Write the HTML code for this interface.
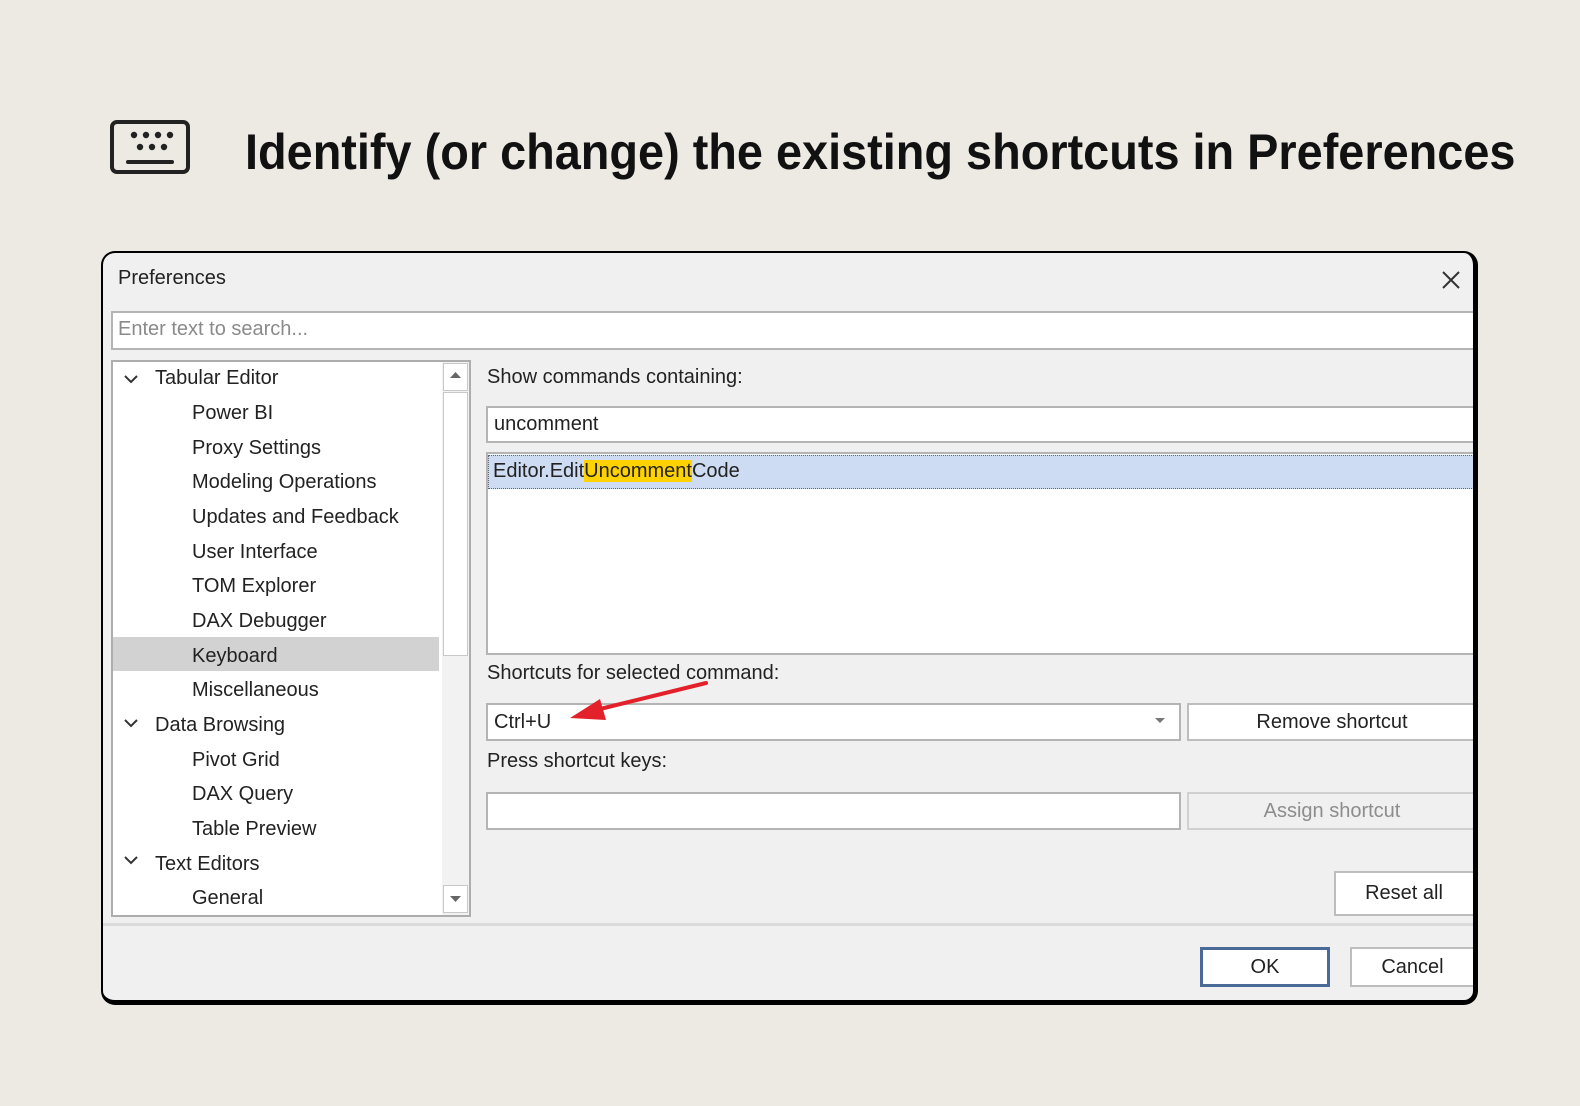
<!DOCTYPE html>
<html><head><meta charset="utf-8"><style>
*{margin:0;padding:0;box-sizing:border-box}
body{width:1580px;height:1106px;background:#ede9e3;position:relative;overflow:hidden;font-family:"Liberation Sans",sans-serif}
.abs{position:absolute}
.title{left:245px;top:123px;font-size:50px;font-weight:bold;color:#111;white-space:nowrap;transform:scaleX(0.937);transform-origin:0 0}
.dlg{left:101px;top:251px;width:1377px;height:754px;background:#f0f0f0;border-style:solid;border-color:#000;border-width:2px 5px 5px 2px;border-radius:14px;overflow:hidden}
.d{font-size:20px;color:#222;white-space:nowrap}
.box{background:#fff;border:2px solid #b4b4b4}
.btn{background:#fff;border:2px solid #bdbdbd;text-align:center;font-size:20px;color:#222}
.tr{position:absolute;font-size:20px;color:#222;white-space:nowrap}
</style></head><body>
<svg class="abs" style="left:110px;top:120px" width="80" height="54" viewBox="0 0 80 54">
<rect x="2" y="2" width="76" height="50" rx="5" fill="none" stroke="#222" stroke-width="4"/>
<g fill="#222"><circle cx="24" cy="15" r="3.2"/><circle cx="36" cy="15" r="3.2"/><circle cx="48" cy="15" r="3.2"/><circle cx="60" cy="15" r="3.2"/>
<circle cx="30" cy="27" r="3.2"/><circle cx="42" cy="27" r="3.2"/><circle cx="54" cy="27" r="3.2"/></g>
<rect x="16" y="40" width="48" height="4" rx="2" fill="#222"/></svg>
<div class="abs title">Identify (or change) the existing shortcuts in Preferences</div>

<div class="abs dlg">
 <div class="abs d" style="left:15px;top:14px">Preferences</div>
 <svg class="abs" style="left:1338px;top:17px" width="20" height="20"><path d="M2 2L18 18M18 2L2 18" stroke="#333" stroke-width="2"/></svg>
 <div class="abs box" style="left:8px;top:58px;width:1380px;height:39px"></div>
 <div class="abs d" style="left:15px;top:65px;color:#8a8a8a">Enter text to search...</div>
 <div class="abs box" style="left:8px;top:107px;width:360px;height:557px;border-color:#adadad"></div>
 <div class="abs" style="left:10px;top:384px;width:326px;height:34px;background:#d2d2d2"></div>
 <div class="abs" style="left:339px;top:109px;width:27px;height:553px;background:#f2f2f2"></div>
 <div class="abs" style="left:340px;top:110px;width:25px;height:28px;background:#fff;border:1px solid #c8c8c8"></div>
 <svg class="abs" style="left:347px;top:119px" width="11" height="7"><path d="M0 6L5.5 0L11 6Z" fill="#666"/></svg>
 <div class="abs" style="left:340px;top:139px;width:25px;height:264px;background:#fff;border:1px solid #c8c8c8"></div>
 <div class="abs" style="left:340px;top:632px;width:25px;height:28px;background:#fff;border:1px solid #c8c8c8"></div>
 <svg class="abs" style="left:347px;top:643px" width="11" height="7"><path d="M0 0L5.5 6L11 0Z" fill="#666"/></svg>
 <svg class="abs" style="left:21px;top:122px" width="14" height="9"><path d="M1 1L7 7L13 1" fill="none" stroke="#333" stroke-width="2"/></svg>
 <svg class="abs" style="left:21px;top:466px" width="14" height="9"><path d="M1 1L7 7L13 1" fill="none" stroke="#333" stroke-width="2"/></svg>
 <svg class="abs" style="left:21px;top:603px" width="14" height="9"><path d="M1 1L7 7L13 1" fill="none" stroke="#333" stroke-width="2"/></svg>
 <div class="tr" style="left:52px;top:114px">Tabular Editor</div>
 <div class="tr" style="left:89px;top:149px">Power BI</div>
 <div class="tr" style="left:89px;top:184px">Proxy Settings</div>
 <div class="tr" style="left:89px;top:218px">Modeling Operations</div>
 <div class="tr" style="left:89px;top:253px">Updates and Feedback</div>
 <div class="tr" style="left:89px;top:288px">User Interface</div>
 <div class="tr" style="left:89px;top:322px">TOM Explorer</div>
 <div class="tr" style="left:89px;top:357px">DAX Debugger</div>
 <div class="tr" style="left:89px;top:392px">Keyboard</div>
 <div class="tr" style="left:89px;top:426px">Miscellaneous</div>
 <div class="tr" style="left:52px;top:461px">Data Browsing</div>
 <div class="tr" style="left:89px;top:496px">Pivot Grid</div>
 <div class="tr" style="left:89px;top:530px">DAX Query</div>
 <div class="tr" style="left:89px;top:565px">Table Preview</div>
 <div class="tr" style="left:52px;top:600px">Text Editors</div>
 <div class="tr" style="left:89px;top:634px">General</div>
 <div class="abs d" style="left:384px;top:113px">Show commands containing:</div>
 <div class="abs box" style="left:383px;top:153px;width:1000px;height:37px"></div>
 <div class="abs d" style="left:391px;top:160px">uncomment</div>
 <div class="abs box" style="left:383px;top:199px;width:1000px;height:203px"></div>
 <div class="abs" style="left:385px;top:202px;width:1000px;height:34px;background:#cddcf3;border-top:1px dotted #666;border-bottom:1px dotted #666;border-left:1px dotted #666"></div>
 <div class="abs d" style="left:390px;top:207px">Editor.Edit<span style="background:#ffd200">Uncomment</span>Code</div>
 <div class="abs d" style="left:384px;top:409px">Shortcuts for selected command:</div>
 <div class="abs box" style="left:383px;top:450px;width:695px;height:38px"></div>
 <div class="abs d" style="left:391px;top:458px">Ctrl+U</div>
 <svg class="abs" style="left:1052px;top:465px" width="10" height="6"><path d="M0 0L5 5L10 0Z" fill="#777"/></svg>
 <div class="abs btn" style="left:1084px;top:450px;width:300px;height:38px;line-height:34px;padding-right:10px">Remove shortcut</div>
 <div class="abs d" style="left:384px;top:497px">Press shortcut keys:</div>
 <div class="abs box" style="left:383px;top:539px;width:695px;height:38px"></div>
 <div class="abs btn" style="left:1084px;top:539px;width:300px;height:38px;line-height:34px;padding-right:10px;color:#8d8d8d;background:#f0f0f0;border-color:#d0d0d0">Assign shortcut</div>
 <div class="abs btn" style="left:1231px;top:618px;width:150px;height:45px;line-height:41px;padding-right:10px">Reset all</div>
 <div class="abs" style="left:0;top:670px;width:1380px;height:3px;background:#dadada"></div>
 <div class="abs btn" style="left:1097px;top:694px;width:130px;height:40px;line-height:34px;border:3px solid #4a6a9a">OK</div>
 <div class="abs btn" style="left:1247px;top:694px;width:150px;height:40px;line-height:36px;padding-right:25px">Cancel</div>
</div>
<svg class="abs" style="left:0;top:0" width="1580" height="1106"><path d="M706 683L596 710" stroke="#e3212b" stroke-width="4" stroke-linecap="round"/><path d="M570 718L600 699L606 720Z" fill="#e3212b"/></svg>
</body></html>
